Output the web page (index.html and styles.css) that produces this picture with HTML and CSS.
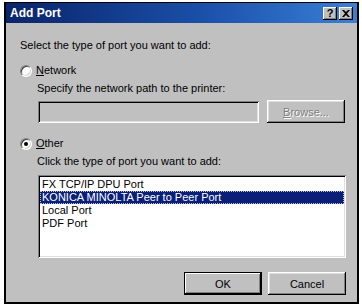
FILE: index.html
```html
<!DOCTYPE html>
<html lang="en">
<head>
<meta charset="UTF-8" />
<title>Add Port</title>
<link rel="stylesheet" href="styles.css">
</head>
<body>

<div class="window">
  <div class="titlebar">
    <span class="title">Add Port</span>
    <div class="caption-buttons">
      <span class="cap-btn help">?</span>
      <span class="cap-btn close">
        <svg width="8" height="7" viewBox="0 0 8 7"><path d="M0 0h2l2 2 2-2h2L5 3.5 8 7H6L4 5 2 7H0l3-3.5z" fill="#000"/></svg>
      </span>
    </div>
  </div>

  <div class="content">
    <div class="line">Select the type of port you want to add:</div>

    <div class="option network">
      <span class="radio"></span>
      <span><u>N</u>etwork</span>
    </div>
    <div class="indent">
      <div class="line small-gap">Specify the network path to the printer:</div>
      <div class="field-row">
        <div class="field"></div>
        <button class="btn disabled"><u>B</u>rowse...</button>
      </div>
    </div>

    <div class="option other">
      <span class="radio checked"></span>
      <span><u>O</u>ther</span>
    </div>
    <div class="indent">
      <div class="line small-gap">Click the type of port you want to add:</div>
      <div class="listbox">
        <div class="item">FX TCP/IP DPU Port</div>
        <div class="item selected">KONICA MINOLTA Peer to Peer Port</div>
        <div class="item">Local Port</div>
        <div class="item">PDF Port</div>
      </div>
    </div>

    <div class="actions">
      <button class="btn default">OK</button>
      <button class="btn">Cancel</button>
    </div>
  </div>
</div>

</body>
</html>
```

FILE: styles.css
```css
body {
  margin: 0;
  background: #fff;
  font-family: "Liberation Sans", Arial, sans-serif;
  font-size: 11px;
  color: #000;
}
.window {
  margin: 2px 0 0 4px;
  width: 355px;
  height: 302px;
  box-sizing: border-box;
  border: 2px solid #000;
  border-top-width: 1px;
  background: #c0c0c0;
}
.titlebar {
  height: 20px;
  display: flex;
  align-items: center;
  padding: 0 4px 0 4px;
  background: linear-gradient(90deg, #0a246a, #1a4fa8 55%, #3a7fd6);
}
.title {
  color: #fff;
  font-weight: bold;
  font-size: 12px;
}
.caption-buttons {
  margin-left: auto;
  display: flex;
  gap: 2px;
}
.cap-btn {
  width: 14px;
  height: 13px;
  box-sizing: border-box;
  background: #c0c0c0;
  box-shadow: inset -1px -1px #000, inset 1px 1px #fff, inset -2px -2px #808080;
  display: flex;
  align-items: center;
  justify-content: center;
  font-weight: bold;
  font-size: 11px;
  line-height: 1;
}
.content {
  padding: 16px 11px 0 14px;
  display: flex;
  flex-direction: column;
  align-items: flex-start;
}
.line {
  line-height: 13px;
  height: 13px;
}
.option {
  display: flex;
  align-items: center;
  gap: 4px;
  height: 13px;
  line-height: 13px;
  margin-top: 12px;
}
.option.other {
  margin-top: 14px;
}
.radio {
  width: 12px;
  height: 12px;
  box-sizing: border-box;
  border-radius: 50%;
  background: #fff;
  border: 1px solid;
  border-color: #808080 #fff #fff #808080;
  box-shadow: inset 1px 1px 0 #404040, inset -1px -1px 0 #d4d0c8;
  position: relative;
}
.radio.checked::after {
  content: "";
  position: absolute;
  left: 3px;
  top: 3px;
  width: 4px;
  height: 4px;
  border-radius: 50%;
  background: #000;
}
.indent {
  padding-left: 17px;
  display: flex;
  flex-direction: column;
  align-items: flex-start;
}
.small-gap {
  margin-top: 5px;
}
.field-row {
  margin-top: 5px;
  margin-left: 1px;
  display: flex;
  align-items: flex-end;
  gap: 8px;
}
.field {
  width: 221px;
  height: 22px;
  background: #c0c0c0;
  box-shadow: inset 1px 1px #808080, inset -1px -1px #fff, inset 2px 2px #000, inset -2px -2px #dfdfdf;
}
.btn {
  width: 78px;
  height: 23px;
  box-sizing: border-box;
  padding: 0;
  border: none;
  background: #c0c0c0;
  font-family: inherit;
  font-size: 11px;
  color: #000;
  box-shadow: inset -1px -1px #000, inset 1px 1px #fff, inset -2px -2px #808080, inset 2px 2px #dfdfdf;
}
.btn.default {
  border: 1px solid #000;
  box-shadow: inset -1px -1px #000, inset 1px 1px #fff, inset -2px -2px #808080;
}
.btn.disabled {
  color: #808080;
  text-shadow: 1px 1px 0 #fff;
}
.listbox {
  margin-top: 7px;
  margin-left: 1px;
  width: 308px;
  height: 83px;
  box-sizing: border-box;
  padding: 3px 2px 2px 2px;
  background: #fff;
  box-shadow: inset 1px 1px #808080, inset -1px -1px #fff, inset 2px 2px #000, inset -2px -2px #dfdfdf;
}
.item {
  height: 13px;
  line-height: 13px;
  padding-left: 2px;
  white-space: nowrap;
}
.item.selected {
  background: #0a1f78;
  color: #fff;
  outline: 1px dotted #c0c0c0;
  outline-offset: -1px;
}
.actions {
  margin-top: 14px;
  align-self: flex-end;
  display: flex;
  gap: 6px;
}
```
